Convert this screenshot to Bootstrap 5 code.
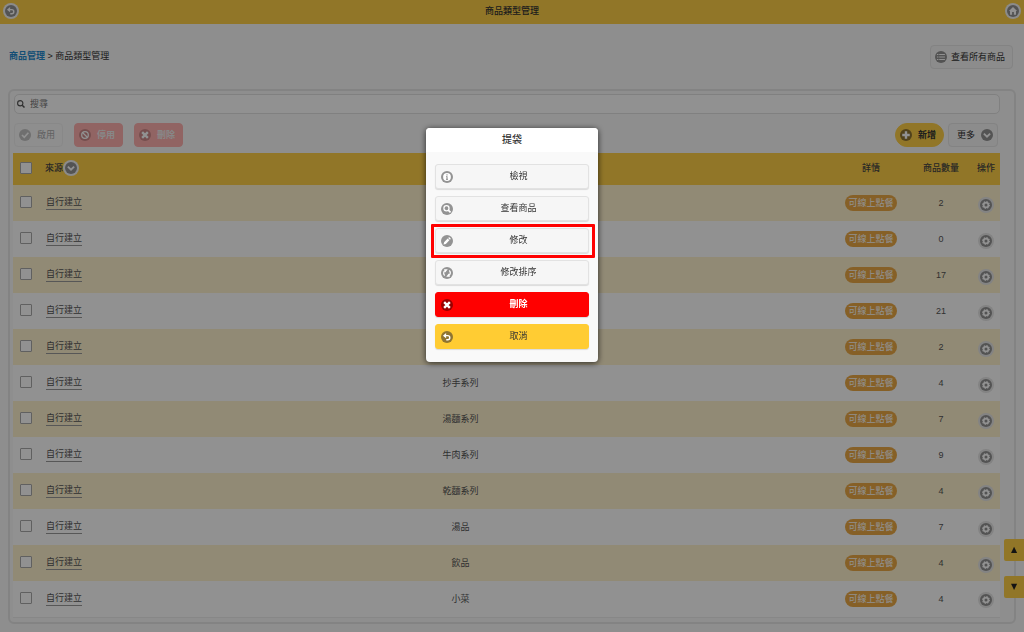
<!DOCTYPE html>
<html lang="zh-Hant">
<head>
<meta charset="utf-8">
<meta name="viewport" content="width=device-width, initial-scale=1">
<title>商品類型管理</title>
<link rel="stylesheet" href="https://cdn.jsdelivr.net/npm/bootstrap@5.3.0/dist/css/bootstrap.min.css">
<style>
  body { font: 9px/12px "Liberation Sans", "Noto Sans CJK TC", sans-serif; background: #f9f9f9; color: #333; }
  a { color: #2489ce; }
  .topbar { height: 24px; padding: 0 3px 2px; background: #ffd047; }
  .topbar h1 { font-size: 9px; line-height: 12px; }
  .crumbs { padding: 21px 11px 20px 9px; }
  .crumbs nav { padding-bottom: 2px; }
  .ico { width: 12px; height: 12px; flex: none; display: block; color: #939393; }
  .ico-sm { width: 8px; height: 8px; }
  .ring { width: 16px; height: 16px; padding: 2px; border: 0; border-radius: 50%; background: #f4f4f4; display: block; flex: none; }
  .types td .ring { background: #e6e6e6; }
  .pill { height: 24px; font: inherit; padding: 0 7px 0 4px; border: 1px solid #e6e6e6; border-radius: 4px; background: #f6f6f6; color: #333; display: flex; align-items: center; gap: 4px; }
  .pill-soft { border-color: #f0f0f0; color: #aaa; background: #f9f9f9; }
  .pill-soft .ico { color: #c4c4c4; }
  .pill-red { background: #ffb0ae; border-color: #ffb0ae; color: #eee; font-weight: bold; margin-left: 11px; }
  .pill-red .ico { color: #ce8a8a; }
  .pill-new { background: #ffd047; border-color: #ffd047; border-radius: 12px; font-weight: bold; }
  .pill-new .ico { color: #8f7431; }
  .pill-more { padding: 0 4px 0 8px; }
  .panel { margin: 0 8px; padding: 3px 14px 4px 3px; border: 2px solid #e6e6e6; border-radius: 6px; }
  .search { height: 20px; margin-left: 1px; border: 1px solid #e2e2e2; border-radius: 5px; background: #fff; padding: 0 2px; gap: 5px; }
  .search input { border: 0; background: none; outline: 0; font-size: 9px; line-height: 12px; padding: 0; }
  .search input::placeholder { color: #777; }
  .tools { padding: 9px 2px 6px 1px; }
  .tools .pill { gap: 6px; }
  .types { width: 100%; table-layout: fixed; border-bottom: 1px solid #ededed; }
  .types th, .types td { height: 36px; padding: 0; text-align: center; vertical-align: middle; }
  .types th { height: 32px; background: #ffd047; color: #444; font-weight: 500; white-space: nowrap; padding-bottom: 2px; }
  .types tbody tr { background: #fff; }
  .types tbody tr:nth-child(odd) { background: #fff2ce; }
  .types input { appearance: none; width: 12px; height: 12px; margin: 0 0 0 7px; border: 1px solid #aaa; border-radius: 1px; background: #fff; display: block; }
  .types td { color: #555; }
  .types td:nth-child(1) { padding-bottom: 2px; }
  .types td:nth-child(2) { text-align: left; padding-left: 5px; }
  .types td:nth-child(6) { padding: 3px 0 0; }
  .types td .origin { color: #555; text-decoration: none; border-bottom: 1px solid #999; display: inline-block; line-height: 13px; }
  .online { display: inline-block; background: #ecaa46; color: #fff; border-radius: 8px; line-height: 16px; padding: 0 3px; white-space: nowrap; }
  .w-check, .w-act { width: 28px; }
  .w-origin { width: 48px; } .w-detail { width: 78px; } .w-count { width: 62px; }
  .jump { position: fixed; right: 0; bottom: 34px; row-gap: 15px; }
  .jump button { width: 20px; height: 22px; padding: 0; border: 0; border-radius: 2px 0 0 2px; background: #ffd047; color: #222; font: 8px/12px "DejaVu Sans", sans-serif; }
  .modal { background: rgba(0, 0, 0, .43); }
  .modal-dialog { width: 172px; margin: 128px auto 0; }
  .modal-content { border: 0; border-radius: 4px; background: #f9f9f9; box-shadow: 0 1px 6px rgba(0, 0, 0, .7); overflow: hidden; }
  .modal-title { height: 24px; font-size: 10px; line-height: 23px; background: #fff; text-align: center; }
  .modal-body { padding: 12px 9px 13px; }
  .act { height: 25px; font: inherit; border: 1px solid #e2e2e2; border-radius: 3px; background: #f6f6f6; color: #333; padding: 0 4px 0 5px; display: flex; align-items: center; box-shadow: 0 1px 1px rgba(0, 0, 0, .12); }
  .act-list { row-gap: 7px; }
  .act span { flex: 1; text-align: center; line-height: 12px; padding-bottom: 1px; }
  .act-del { background: red; border-color: red; color: #fff; font-weight: bold; }
  .act-del .ico { color: #900; }
  .act-back { background: #fc3; border-color: #fc3; }
  .act-back .ico { color: #8f7431; }
  .marked { position: relative; }
  .marked::after { content: ""; position: absolute; inset: -5px -7px -6px -5px; border: 3px solid red; border-radius: 1px; }
</style>
</head>
<body>
<svg class="d-none">
  <symbol id="back" viewBox="0 0 16 16"><circle cx="8" cy="8" r="8" fill="currentColor"/><path d="M5 6.2h4a2.7 2.7 0 0 1 0 5.4H7" fill="none" stroke="#fff" stroke-width="1.9"/><path d="M2.6 6.2 6.8 2.8v6.8z" fill="#fff"/></symbol>
  <symbol id="home" viewBox="0 0 16 16"><circle cx="8" cy="8" r="8" fill="currentColor"/><path d="M8 2.6 2.6 8H4v5h2.8V9.2h2.4V13H12V8h1.4z" fill="#fff"/></symbol>
  <symbol id="list" viewBox="0 0 16 16"><circle cx="8" cy="8" r="8" fill="currentColor"/><path d="M2.6 4.7h2M5.6 4.7h7.6M2.6 8h2M5.6 8h7.6M2.6 11.3h2M5.6 11.3h7.6" fill="none" stroke="#fff" stroke-width="1.4"/></symbol>
  <symbol id="check" viewBox="0 0 16 16"><circle cx="8" cy="8" r="8" fill="currentColor"/><path d="m4 8 3 3 5.5-6" fill="none" stroke="#fff" stroke-width="2.2"/></symbol>
  <symbol id="ban" viewBox="0 0 16 16"><circle cx="8" cy="8" r="8" fill="currentColor"/><circle cx="8" cy="8" r="4.4" fill="none" stroke="#fff" stroke-width="1.7"/><path d="m5 5 6 6" stroke="#fff" stroke-width="1.7"/></symbol>
  <symbol id="cross" viewBox="0 0 16 16"><circle cx="8" cy="8" r="8" fill="currentColor"/><path d="m4.2 4.2 7.6 7.6m0-7.6-7.6 7.6" stroke="#fff" stroke-width="3.2"/></symbol>
  <symbol id="plus" viewBox="0 0 16 16"><circle cx="8" cy="8" r="8" fill="currentColor"/><path d="M8 3v10M3 8h10" stroke="#fff" stroke-width="3.2"/></symbol>
  <symbol id="down" viewBox="0 0 16 16"><circle cx="8" cy="8" r="8" fill="currentColor"/><path d="m3.8 6.2 4.2 4 4.2-4" fill="none" stroke="#fff" stroke-width="2.5"/></symbol>
  <symbol id="info" viewBox="0 0 16 16"><circle cx="8" cy="8" r="8" fill="currentColor"/><circle cx="8" cy="8" r="5.2" fill="#fff"/><path d="M8 4.2v1.8M8 7v4.6M6.8 11.2h2.4M6.9 7.4H8" fill="none" stroke="currentColor" stroke-width="1.5"/></symbol>
  <symbol id="find" viewBox="0 0 16 16"><circle cx="8" cy="8" r="8" fill="currentColor"/><circle cx="7.3" cy="7" r="3.4" fill="none" stroke="#fff" stroke-width="1.7"/><path d="m9.7 9.5 3 3" stroke="#fff" stroke-width="2.2"/></symbol>
  <symbol id="edit" viewBox="0 0 16 16"><circle cx="8" cy="8" r="8" fill="currentColor"/><path d="m3.4 12.6.7-3 4.8-4.8 2.3 2.3-4.8 4.8zM9.6 4.1l1-1c.6-.5 2.8 1.7 2.3 2.3l-1 1z" fill="#fff"/></symbol>
  <symbol id="sort" viewBox="0 0 16 16"><circle cx="8" cy="8" r="8" fill="currentColor"/><path d="M5 11.4A4.3 4.3 0 0 1 5 5M11 4.6A4.3 4.3 0 0 1 11 11" fill="none" stroke="#fff" stroke-width="1.7"/><path d="M4 3h5L5.6 7.4zM12 13H7l3.4-4.4z" fill="#fff"/></symbol>
  <symbol id="gear" viewBox="0 0 16 16"><circle cx="8" cy="8" r="8" fill="currentColor"/><circle cx="8" cy="8" r="3.2" fill="none" stroke="#fff" stroke-width="2.4"/><circle cx="8" cy="8" r="4.6" fill="none" stroke="#fff" stroke-width="1.4" stroke-dasharray="1.8 1.81"/></symbol>
  <symbol id="lens" viewBox="0 0 16 16"><circle cx="6.5" cy="6.5" r="5.3" fill="none" stroke="#555" stroke-width="2.2"/><path d="m10.4 10.4 4.6 4.6" stroke="#555" stroke-width="3"/></symbol>
</svg>

<header class="topbar d-flex align-items-center justify-content-between">
  <button class="ring" aria-label="返回"><svg class="ico"><use href="#back"/></svg></button>
  <h1 class="m-0">商品類型管理</h1>
  <button class="ring" aria-label="首頁"><svg class="ico"><use href="#home"/></svg></button>
</header>

<main>
  <div class="crumbs d-flex align-items-center justify-content-between">
    <nav><a class="text-decoration-none fw-bold" href="#">商品管理</a> &gt; 商品類型管理</nav>
    <button class="pill"><svg class="ico"><use href="#list"/></svg>查看所有商品</button>
  </div>

  <section class="panel">
    <label class="search d-flex align-items-center">
      <svg class="ico ico-sm"><use href="#lens"/></svg>
      <input class="flex-fill" type="text" placeholder="搜尋" aria-label="搜尋">
    </label>
    <div class="tools d-flex align-items-center">
      <button class="pill pill-soft" disabled><svg class="ico"><use href="#check"/></svg>啟用</button>
      <button class="pill pill-red" disabled><svg class="ico"><use href="#ban"/></svg>停用</button>
      <button class="pill pill-red" disabled><svg class="ico"><use href="#cross"/></svg>刪除</button>
      <button class="pill pill-new ms-auto"><svg class="ico"><use href="#plus"/></svg>新增</button>
      <button class="pill pill-more ms-1">更多<svg class="ico"><use href="#down"/></svg></button>
    </div>
    <table class="types">
      <colgroup><col class="w-check"><col class="w-origin"><col><col class="w-detail"><col class="w-count"><col class="w-act"></colgroup>
      <thead>
        <tr>
          <th><input type="checkbox" aria-label="全選"></th>
          <th><div class="d-flex align-items-center ps-1">來源<button class="ring" aria-label="排序"><svg class="ico"><use href="#down"/></svg></button></div></th>
          <th></th><th>詳情</th><th>商品數量</th><th>操作</th>
        </tr>
      </thead>
      <tbody id="rows"></tbody>
    </table>
  </section>
</main>

<div class="jump d-grid">
  <button aria-label="往上">▲</button>
  <button aria-label="往下">▼</button>
</div>

<div class="modal d-block" role="dialog" aria-labelledby="menuTitle">
  <div class="modal-dialog">
    <div class="modal-content">
      <h2 class="modal-title" id="menuTitle">提袋</h2>
      <div class="modal-body act-list d-grid">
        <button class="act"><svg class="ico"><use href="#info"/></svg><span>檢視</span></button>
        <button class="act"><svg class="ico"><use href="#find"/></svg><span>查看商品</span></button>
        <button class="act marked"><svg class="ico"><use href="#edit"/></svg><span>修改</span></button>
        <button class="act"><svg class="ico"><use href="#sort"/></svg><span>修改排序</span></button>
        <button class="act act-del"><svg class="ico"><use href="#cross"/></svg><span>刪除</span></button>
        <button class="act act-back"><svg class="ico"><use href="#back"/></svg><span>取消</span></button>
      </div>
    </div>
  </div>
</div>

<script src="https://cdn.jsdelivr.net/npm/bootstrap@5.3.0/dist/js/bootstrap.bundle.min.js"></script>
<script>
  const types = [['', 2], ['', 0], ['', 17], ['', 21], ['', 2], ['抄手系列', 4], ['湯麵系列', 7],
    ['牛肉系列', 9], ['乾麵系列', 4], ['湯品', 7], ['飲品', 4], ['小菜', 4]];
  document.getElementById('rows').innerHTML = types.map(([name, count]) => `
    <tr>
      <td><input type="checkbox" aria-label="選取"></td>
      <td><a class="origin" href="#">自行建立</a></td>
      <td>${name}</td>
      <td><span class="online">可線上點餐</span></td>
      <td>${count}</td>
      <td><button class="ring mx-auto" aria-label="操作"><svg class="ico"><use href="#gear"/></svg></button></td>
    </tr>`).join('');
</script>
</body>
</html>
